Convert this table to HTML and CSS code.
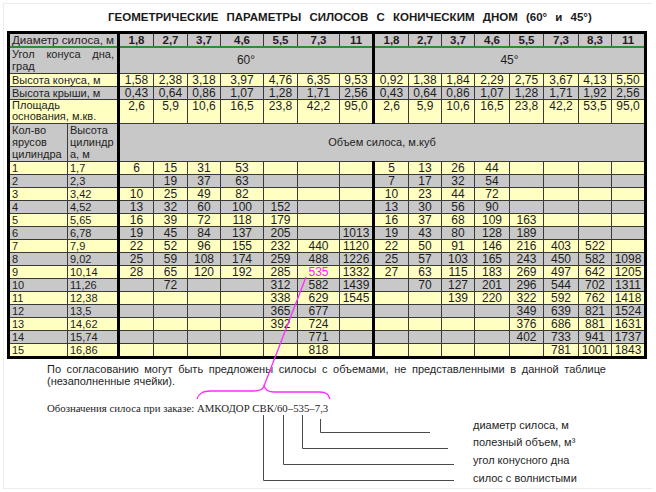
FILE: index.html
```html
<!DOCTYPE html>
<html lang="ru">
<head>
<meta charset="utf-8">
<title>Геометрические параметры силосов</title>
<link rel="stylesheet" href="styles.css">
</head>
<body>
<div class="page">
  <h1 class="title">ГЕОМЕТРИЧЕСКИЕ ПАРАМЕТРЫ СИЛОСОВ С КОНИЧЕСКИМ ДНОМ (60° и 45°)</h1>
  <table class="silo">
    <colgroup>
      <col class="ca"><col class="cb">
      <col class="w35"><col class="w34"><col class="w33"><col class="w43"><col class="w34"><col class="w42"><col class="w34">
      <col class="w35"><col class="w33"><col class="w33"><col class="w35"><col class="w34"><col class="w35"><col class="w33"><col class="w34">
    </colgroup>
    <tr class="r-hdr g">
      <td colspan="2" class="lbl lb big">Диаметр силоса, м</td>
      <th>1,8</th><th>2,7</th><th>3,7</th><th>4,6</th><th>5,5</th><th>7,3</th><th class="gs">11</th>
      <th>1,8</th><th>2,7</th><th>3,7</th><th>4,6</th><th>5,5</th><th>7,3</th><th>8,3</th><th>11</th>
    </tr>
    <tr class="r-ang g">
      <td colspan="2" class="lbl lb just">Угол конуса дна, град</td>
      <td colspan="7" class="gs">60°</td>
      <td colspan="8">45°</td>
    </tr>
    <tr class="r-one y">
      <td colspan="2" class="lbl lb">Высота конуса, м</td>
      <td>1,58</td><td>2,38</td><td>3,18</td><td>3,97</td><td>4,76</td><td>6,35</td><td class="gs">9,53</td>
      <td>0,92</td><td>1,38</td><td>1,84</td><td>2,29</td><td>2,75</td><td>3,67</td><td>4,13</td><td>5,50</td>
    </tr>
    <tr class="r-one g">
      <td colspan="2" class="lbl lb">Высота крыши, м</td>
      <td>0,43</td><td>0,64</td><td>0,86</td><td>1,07</td><td>1,28</td><td>1,71</td><td class="gs">2,56</td>
      <td>0,43</td><td>0,64</td><td>0,86</td><td>1,07</td><td>1,28</td><td>1,71</td><td>1,92</td><td>2,56</td>
    </tr>
    <tr class="r-two y">
      <td colspan="2" class="lbl lb">Площадь основания, м.кв.</td>
      <td>2,6</td><td>5,9</td><td>10,6</td><td>16,5</td><td>23,8</td><td>42,2</td><td class="gs">95,0</td>
      <td>2,6</td><td>5,9</td><td>10,6</td><td>16,5</td><td>23,8</td><td>42,2</td><td>53,5</td><td>95,0</td>
    </tr>
    <tr class="r-cnt g">
      <td class="lbl tl">Кол-во<br>ярусов<br>цилиндра</td>
      <td class="lbl tl lb">Высота<br>цилиндр<br>а, м</td>
      <td colspan="15" class="vol">Объем силоса, м.куб</td>
    </tr>
    <tr class="r-d y"><td class="lbl">1</td><td class="lbl lb">1,7</td><td>6</td><td>15</td><td>31</td><td>53</td><td></td><td></td><td class="gs"></td><td>5</td><td>13</td><td>26</td><td>44</td><td></td><td></td><td></td><td></td></tr>
    <tr class="r-d g"><td class="lbl">2</td><td class="lbl lb">2,3</td><td></td><td>19</td><td>37</td><td>63</td><td></td><td></td><td class="gs"></td><td>7</td><td>17</td><td>32</td><td>54</td><td></td><td></td><td></td><td></td></tr>
    <tr class="r-d y"><td class="lbl">3</td><td class="lbl lb">3,42</td><td>10</td><td>25</td><td>49</td><td>82</td><td></td><td></td><td class="gs"></td><td>10</td><td>23</td><td>44</td><td>72</td><td></td><td></td><td></td><td></td></tr>
    <tr class="r-d g"><td class="lbl">4</td><td class="lbl lb">4,52</td><td>13</td><td>32</td><td>60</td><td>100</td><td>152</td><td></td><td class="gs"></td><td>13</td><td>30</td><td>56</td><td>90</td><td></td><td></td><td></td><td></td></tr>
    <tr class="r-d y"><td class="lbl">5</td><td class="lbl lb">5,65</td><td>16</td><td>39</td><td>72</td><td>118</td><td>179</td><td></td><td class="gs"></td><td>16</td><td>37</td><td>68</td><td>109</td><td>163</td><td></td><td></td><td></td></tr>
    <tr class="r-d g"><td class="lbl">6</td><td class="lbl lb">6,78</td><td>19</td><td>45</td><td>84</td><td>137</td><td>205</td><td></td><td class="gs">1013</td><td>19</td><td>43</td><td>80</td><td>128</td><td>189</td><td></td><td></td><td></td></tr>
    <tr class="r-d y"><td class="lbl">7</td><td class="lbl lb">7,9</td><td>22</td><td>52</td><td>96</td><td>155</td><td>232</td><td>440</td><td class="gs">1120</td><td>22</td><td>50</td><td>91</td><td>146</td><td>216</td><td>403</td><td>522</td><td></td></tr>
    <tr class="r-d g"><td class="lbl">8</td><td class="lbl lb">9,02</td><td>25</td><td>59</td><td>108</td><td>174</td><td>259</td><td>488</td><td class="gs">1226</td><td>25</td><td>57</td><td>103</td><td>165</td><td>243</td><td>450</td><td>582</td><td>1098</td></tr>
    <tr class="r-d y"><td class="lbl">9</td><td class="lbl lb">10,14</td><td>28</td><td>65</td><td>120</td><td>192</td><td>285</td><td class="hl">535</td><td class="gs">1332</td><td>27</td><td>63</td><td>115</td><td>183</td><td>269</td><td>497</td><td>642</td><td>1205</td></tr>
    <tr class="r-d g"><td class="lbl">10</td><td class="lbl lb">11,26</td><td></td><td>72</td><td></td><td></td><td>312</td><td>582</td><td class="gs">1439</td><td></td><td>70</td><td>127</td><td>201</td><td>296</td><td>544</td><td>702</td><td>1311</td></tr>
    <tr class="r-d y"><td class="lbl">11</td><td class="lbl lb">12,38</td><td></td><td></td><td></td><td></td><td>338</td><td>629</td><td class="gs">1545</td><td></td><td></td><td>139</td><td>220</td><td>322</td><td>592</td><td>762</td><td>1418</td></tr>
    <tr class="r-d g"><td class="lbl">12</td><td class="lbl lb">13,5</td><td></td><td></td><td></td><td></td><td>365</td><td>677</td><td class="gs"></td><td></td><td></td><td></td><td></td><td>349</td><td>639</td><td>821</td><td>1524</td></tr>
    <tr class="r-d y"><td class="lbl">13</td><td class="lbl lb">14,62</td><td></td><td></td><td></td><td></td><td>392</td><td>724</td><td class="gs"></td><td></td><td></td><td></td><td></td><td>376</td><td>686</td><td>881</td><td>1631</td></tr>
    <tr class="r-d g"><td class="lbl">14</td><td class="lbl lb">15,74</td><td></td><td></td><td></td><td></td><td></td><td>771</td><td class="gs"></td><td></td><td></td><td></td><td></td><td>402</td><td>733</td><td>941</td><td>1737</td></tr>
    <tr class="r-d y"><td class="lbl">15</td><td class="lbl lb">16,86</td><td></td><td></td><td></td><td></td><td></td><td>818</td><td class="gs"></td><td></td><td></td><td></td><td></td><td></td><td>781</td><td>1001</td><td>1843</td></tr>
  </table>
  <p class="note">По согласованию могут быть предложены силосы с объемами, не представленными в данной таблице (незаполненные ячейки).</p>
  <p class="order">Обозначения силоса при заказе: АМКОДОР СВК/60–535–7,3</p>
  <ul class="legend">
    <li>диаметр силоса, м</li>
    <li>полезный объем, м³</li>
    <li>угол конусного дна</li>
    <li>силос с волнистыми</li>
  </ul>
  <svg class="overlay" width="656" height="492" viewBox="0 0 656 492" aria-hidden="true">
    <path class="mag" d="M306 277 L264 386"/>
    <path class="mag" d="M197 399 C199 393 203 391 211 391 L254 391 C260 391 263 389 264 386 C265 389 268 392 274 392 L320 392 C326 392 329 394 330 399"/>
    <path class="lead" d="M320.5 419 V432.5 H430"/>
    <path class="lead" d="M302.5 415 V448.5 H448"/>
    <path class="lead" d="M283.5 415 V464.5 H454"/>
    <path class="lead" d="M263.5 415 V480.5 H454"/>
  </svg>
</div>
</body>
</html>
```
FILE: styles.css
```css
html, body {
  margin: 0;
  padding: 0;
  background: #fff;
}

.page {
  position: relative;
  margin: 3px;
  width: 650px;
  height: 486px;
  box-sizing: border-box;
  border: 1px solid #ececec;
  border-right-color: #fff;
  color: #1e1e1e;
  font-family: "Liberation Sans", Arial, sans-serif;
}

.title {
  margin: 6px 0 0 104px;
  font-size: 11.5px;
  font-weight: bold;
  line-height: 14px;
  word-spacing: 5px;
  white-space: nowrap;
  color: #1a1a1a;
}

.silo {
  margin: 7px 0 0 3px;
  border-collapse: collapse;
  table-layout: fixed;
  width: 640px;
  border: 3px solid #000;
}

.ca { width: 59px; }
.cb { width: 51px; }
.w33 { width: 33px; }
.w34 { width: 34px; }
.w35 { width: 35px; }
.w42 { width: 42px; }
.w43 { width: 43px; }

.silo td, .silo th {
  border: 1px solid #3a3a3a;
  padding: 0 1px;
  font-size: 12px;
  font-weight: normal;
  line-height: 12px;
  text-align: center;
  vertical-align: middle;
  white-space: nowrap;
  overflow: hidden;
}

.silo th {
  font-weight: bold;
  font-size: 11.5px;
}

.g td, .g th { background: #c8c8c8; }
.y td, .y th { background: #ffffc2; }

.silo .lbl {
  text-align: left;
  font-size: 11px;
  padding-left: 2px;
}

.silo .big { font-size: 11.6px; }

.silo .lb { border-right: 3px solid #000; }
.silo .gs { border-right: 3px solid #000; }

.r-hdr { height: 14px; }
.r-hdr td, .r-hdr th { border-bottom: 2px solid #2f8f2f; }

.r-ang { height: 26px; }
.silo .just {
  white-space: normal;
  text-align: justify;
  line-height: 12px;
  vertical-align: top;
  padding-right: 3px;
}

.r-one { height: 12px; }

.r-two { height: 22px; }
.r-two td {
  vertical-align: top;
  padding-top: 1px;
  line-height: 11px;
}
.r-two td.lbl {
  white-space: normal;
  padding-top: 0;
  line-height: 11.5px;
}

.r-cnt { height: 38px; }
.silo .tl {
  vertical-align: top;
  line-height: 12px;
  padding-top: 0;
}
.silo .vol {
  font-size: 11px;
  line-height: 12px;
}

.r-d { height: 13px; }

.silo .hl { color: #ff1aff; }

.note {
  margin: 4px 0 0 43px;
  width: 559px;
  font-size: 11px;
  line-height: 12.5px;
  text-align: justify;
}

.order {
  margin: 13px 0 0 43px;
  font-family: "Liberation Serif", "Times New Roman", serif;
  font-size: 10.8px;
  line-height: 14px;
  white-space: nowrap;
}

.legend {
  list-style: none;
  margin: 2px 0 0 469px;
  padding: 0;
  display: flex;
  flex-direction: column;
  font-size: 11px;
  line-height: 17.7px;
}

.overlay {
  position: absolute;
  left: -4px;
  top: -4px;
  pointer-events: none;
  overflow: visible;
}

.mag {
  fill: none;
  stroke: #ff2bff;
  stroke-width: 1.3;
}

.lead {
  fill: none;
  stroke: #4a4a4a;
  stroke-width: 1;
}
```
